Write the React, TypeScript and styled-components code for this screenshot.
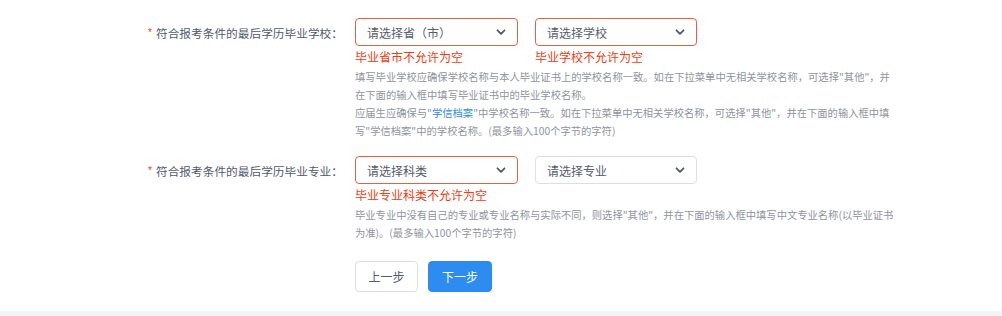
import React from "react";
import styled, { createGlobalStyle } from "styled-components";

const GlobalStyle = createGlobalStyle`
  html, body {
    margin: 0;
    padding: 0;
    background: #f3f4f6;
  }
  body {
    font-family: "Noto Sans CJK SC", "Liberation Sans", sans-serif;
    color: #515a6e;
  }
`;

const Page = styled.div`
  width: 1002px;
  height: 316px;
  box-sizing: border-box;
  padding: 0 1px 5px 0;
  overflow: hidden;
`;

const Card = styled.div`
  background: #ffffff;
  padding: 18px 0 18px 0;
  height: 100%;
  box-sizing: border-box;
`;

const FormItem = styled.div<{ $gapTop?: number }>`
  display: grid;
  grid-template-columns: 355px 1fr;
  margin-top: ${(p) => p.$gapTop ?? 0}px;
`;

const Label = styled.div`
  display: flex;
  justify-content: flex-end;
  align-items: center;
  height: 28px;
  padding-right: 12px;
  font-size: 11.7px;
  color: #515a6e;
  white-space: nowrap;
`;

const Star = styled.span`
  color: #ed4014;
  font-size: 10px;
  margin-right: 4px;
  font-family: "Liberation Sans", sans-serif;
`;

const Content = styled.div`
  display: flex;
  flex-direction: column;
`;

const Row = styled.div`
  display: flex;
  gap: 17px;
`;

const SelectBox = styled.div<{ $invalid?: boolean; $w: number }>`
  width: ${(p) => p.$w}px;
  height: 28px;
  box-sizing: border-box;
  border: 1px solid ${(p) => (p.$invalid ? "#e4603f" : "#dcdee2")};
  border-radius: 4px;
  display: flex;
  align-items: center;
  justify-content: space-between;
  padding: 0 10px 0 11px;
  font-size: 12px;
  color: #555d6e;
  background: #fff;
`;

const Chevron = styled.svg`
  width: 12px;
  height: 12px;
`;

const ErrorText = styled.div<{ $w: number }>`
  width: ${(p) => p.$w}px;
  font-size: 12px;
  line-height: 16px;
  color: #ed4014;
  white-space: nowrap;
`;

const ErrorRow = styled(Row)`
  margin-top: 3px;
`;

const Help = styled.div`
  margin-top: 3px;
  font-size: 10.3px;
  line-height: 18px;
  color: #8f949e;
  white-space: nowrap;
`;

const Link = styled.span`
  color: #2d8cf0;
`;

const Buttons = styled.div`
  display: flex;
  gap: 10px;
  margin-top: 19px;
`;

const Button = styled.button<{ $primary?: boolean }>`
  width: ${(p) => (p.$primary ? 64 : 63)}px;
  height: 31px;
  box-sizing: border-box;
  border-radius: 4px;
  border: 1px solid ${(p) => (p.$primary ? "#2d8cf0" : "#dcdee2")};
  background: ${(p) => (p.$primary ? "#2d8cf0" : "#fff")};
  color: ${(p) => (p.$primary ? "#fff" : "#515a6e")};
  font-size: 12px;
  font-family: inherit;
  padding: 0;
  cursor: pointer;
`;

const ArrowIcon = () => (
  <Chevron viewBox="0 0 12 12">
    <path
      d="M2.5 4.3 L6 7.8 L9.5 4.3"
      fill="none"
      stroke="#515a6e"
      strokeWidth="1.8"
      strokeLinecap="round"
      strokeLinejoin="round"
    />
  </Chevron>
);

const Select = ({ text, w, invalid }: { text: string; w: number; invalid?: boolean }) => (
  <SelectBox $w={w} $invalid={invalid}>
    <span>{text}</span>
    <ArrowIcon />
  </SelectBox>
);

export default function App() {
  return (
    <>
      <GlobalStyle />
      <Page>
        <Card>
          <FormItem>
            <Label>
              <Star>*</Star>符合报考条件的最后学历毕业学校：
            </Label>
            <Content>
              <Row>
                <Select text="请选择省（市）" w={163} invalid />
                <Select text="请选择学校" w={162} invalid />
              </Row>
              <ErrorRow>
                <ErrorText $w={163}>毕业省市不允许为空</ErrorText>
                <ErrorText $w={162}>毕业学校不允许为空</ErrorText>
              </ErrorRow>
              <Help>
                填写毕业学校应确保学校名称与本人毕业证书上的学校名称一致。如在下拉菜单中无相关学校名称，可选择"其他"，并
                <br />
                在下面的输入框中填写毕业证书中的毕业学校名称。
                <br />
                应届生应确保与"<Link>学信档案</Link>"中学校名称一致。如在下拉菜单中无相关学校名称，可选择"其他"，并在下面的输入框中填
                <br />
                写"学信档案"中的学校名称。(最多输入100个字节的字符)
              </Help>
            </Content>
          </FormItem>
          <FormItem $gapTop={16}>
            <Label>
              <Star>*</Star>符合报考条件的最后学历毕业专业：
            </Label>
            <Content>
              <Row>
                <Select text="请选择科类" w={163} invalid />
                <Select text="请选择专业" w={162} />
              </Row>
              <ErrorRow>
                <ErrorText $w={163}>毕业专业科类不允许为空</ErrorText>
              </ErrorRow>
              <Help>
                毕业专业中没有自己的专业或专业名称与实际不同，则选择"其他"，并在下面的输入框中填写中文专业名称(以毕业证书
                <br />
                为准)。(最多输入100个字节的字符)
              </Help>
              <Buttons>
                <Button>上一步</Button>
                <Button $primary>下一步</Button>
              </Buttons>
            </Content>
          </FormItem>
        </Card>
      </Page>
    </>
  );
}
